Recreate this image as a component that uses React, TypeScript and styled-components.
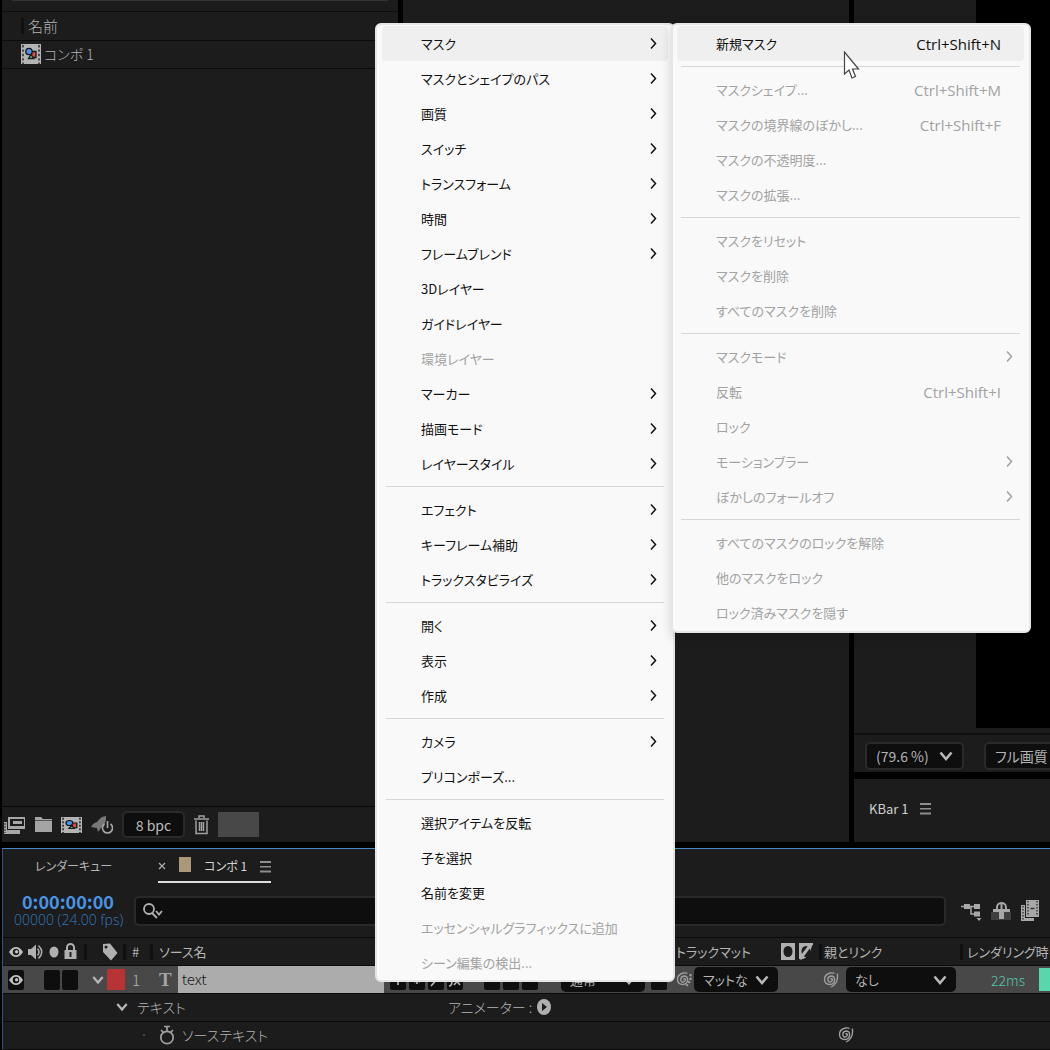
import React from "react";
import styled, { createGlobalStyle, css } from "styled-components";

const Global = createGlobalStyle`
  * { box-sizing: border-box; }
  html, body { margin: 0; background: #000; }
  body, button, input, select {
    font-family: "Noto Sans CJK JP", "Noto Sans", sans-serif;
    font-feature-settings: "palt";
    font-size: 15px;
    line-height: 20px;
    color: #b4b4b4;
  }
  body { overflow: hidden; }
  button { border: 0; margin: 0; padding: 0; background: none; white-space: nowrap; }
  svg { display: block; flex: none; }
`;

const Window = styled.main`
  position: relative;
  display: flex;
  flex-direction: column;
  gap: 6px;
  min-height: 100vh;
  padding-left: 2px;
  overflow: hidden;
`;

const Workspace = styled.div`
  flex: 1;
  display: flex;
  gap: 5px;
`;

const Panel = styled.section<{ $width?: string }>`
  display: flex;
  flex-direction: column;
  min-width: 0;
  background: #1c1c1c;
  ${(p) => (p.$width ? css`flex: none; width: ${p.$width};` : css`flex: 1;`)}
`;

const PanelTop = styled.div`
  height: 12px;
  border-bottom: 1px solid #0c0c0c;
  &::before {
    content: "";
    display: block;
    height: 1px;
    margin: 0 10px;
    background: #343434;
  }
`;

const ProjectTable = styled.table`
  width: 100%;
  border-collapse: collapse;
  text-align: left;
  tr { height: 28px; border-bottom: 1px solid #0c0c0c; }
  th, td { padding: 0 0 0 19px; font-weight: 300; }
`;

const HeadLabel = styled.span`
  display: flex;
  align-items: center;
  height: 16px;
  padding-left: 4px;
  border-left: 3px solid #101010;
`;

const AssetName = styled.span`
  display: flex;
  align-items: center;
  gap: 3px;
  font-size: 14px;
`;

const Spacer = styled.div`
  flex: 1;
`;

const Toolbar = styled.div<{ $gap: number }>`
  display: flex;
  align-items: center;
  gap: ${(p) => p.$gap}px;
  height: 36px;
  border-top: 1px solid #080808;
`;

const IconButton = styled.button`
  display: grid;
  place-items: center;
  color: #a4a4a4;
`;

const DepthButton = styled.button`
  width: 63px;
  height: 27px;
  border: 2px solid #2a2a2a;
  border-radius: 5px;
  background: #0e0e0e;
  color: #bcbcbc;
  font-size: 14px;
`;

const Swatch = styled.div`
  width: 41px;
  height: 25px;
  background: #484848;
`;

const RightColumn = styled.div`
  flex: 1;
  display: flex;
  flex-direction: column;
  gap: 7px;
  min-width: 0;
`;

const Canvas = styled.div`
  flex: 1;
  margin: 0 0 5px 122px;
  background: #000;
`;

const ViewerBar = styled.div`
  display: flex;
  align-items: center;
  gap: 10px;
  height: 39px;
  padding: 4px 0 0 11px;
  border-top: 2px solid #101010;
  overflow: hidden;
`;

const Divider = styled.span`
  width: 2px;
  height: 24px;
  background: #0c0c0c;
`;

const KBarPanel = styled.section`
  background: #1c1c1c;
`;

const KBar = styled.header`
  display: flex;
  align-items: center;
  gap: 12px;
  height: 63px;
  padding: 0 0 4px 15px;
  font-size: 13px;
  color: #cfcfcf;
`;

const SelectBox = styled.label<{ $width: number; $framed?: boolean }>`
  flex: none;
  display: grid;
  align-items: center;
  width: ${(p) => p.$width}px;
  height: ${(p) => (p.$framed ? 28 : 25)}px;
  border: ${(p) => (p.$framed ? "2px solid #2a2a2a" : "0")};
  border-radius: 5px;
  background: #0e0e0e;
  select, svg { grid-area: 1 / 1; }
  select {
    width: 100%;
    padding: 0 0 0 9px;
    border: 0;
    outline: 0;
    background: none;
    font-size: ${(p) => (p.$framed ? 14 : 13)}px;
    appearance: none;
  }
  svg { justify-self: end; margin-right: 9px; pointer-events: none; }
`;

const Timeline = styled.section`
  min-width: 0;
  border-top: 1px solid #4688c8;
  border-bottom: 1px solid #0a0a0a;
  border-left: 1px solid #27578c;
  background: #1c1c1c;
`;

const Tabs = styled.div`
  display: flex;
  align-items: center;
  gap: 46px;
  height: 36px;
  padding-left: 32px;
`;

const Tab = styled.button<{ $active?: boolean }>`
  display: flex;
  align-items: center;
  gap: 13px;
  height: 32px;
  border-bottom: 2px solid ${(p) => (p.$active ? "#dedede" : "transparent")};
  color: ${(p) => (p.$active ? "#d4d4d4" : "#b4b4b4")};
  font-size: 12px;
`;

const TabChip = styled.span`
  width: 12px;
  height: 15px;
  margin-bottom: 4px;
  background: #ab9878;
`;

const Controls = styled.div`
  display: flex;
  align-items: center;
  height: 52px;
  padding-right: 10px;
`;

const Clock = styled.div`
  width: 131px;
  padding-left: 11px;
`;

const Time = styled.div`
  padding-left: 8px;
  font-size: 18px;
  font-weight: 700;
  line-height: 18px;
  color: #4a94e4;
`;

const Frames = styled.div`
  font-family: "Open Sans", "Noto Sans", sans-serif;
  font-size: 14px;
  font-weight: 300;
  line-height: 20px;
  color: #3577bd;
  white-space: nowrap;
`;

const Search = styled.label`
  flex: 1;
  display: flex;
  align-items: center;
  gap: 6px;
  height: 30px;
  margin-right: 15px;
  padding-left: 7px;
  border: 2px solid #292929;
  border-radius: 5px;
  background: #0e0e0e;
  input { flex: 1; min-width: 0; border: 0; outline: 0; background: none; }
`;

const Tools = styled.div`
  display: flex;
  gap: 9px;
`;

const Row = styled.div<{ $selected?: boolean }>`
  display: grid;
  grid-template-columns: 84px 39px 27px 231px minmax(0, 1fr) 146px 141px 87px;
  align-items: center;
  height: 28px;
  border-top: 1px solid #0a0a0a;
  background: ${(p) => (p.$selected ? "#484848" : "transparent")};
  font-size: 13px;
  white-space: nowrap;
`;

const Cell = styled.div<{ $gap?: number; $pad?: number; $ruled?: boolean }>`
  display: flex;
  align-items: center;
  gap: ${(p) => p.$gap ?? 0}px;
  padding-left: ${(p) => p.$pad ?? 0}px;
  height: 16px;
  min-width: 0;
  border-right: ${(p) => (p.$ruled ? "3px solid #101010" : "0")};
`;

const Box = styled.button`
  flex: none;
  display: grid;
  place-items: center;
  width: 16px;
  height: 20px;
  border-radius: 2px;
  background: #0e0e0e;
  color: #c4c4c4;
`;

const ColorLabel = styled.span`
  width: 18px;
  height: 21px;
  background: #b83434;
`;

const Glyph = styled.span`
  font-family: "Liberation Serif", serif;
  font-size: 19px;
  font-weight: 700;
  color: #a4a4a4;
`;

const LayerName = styled.div`
  flex: 1;
  height: 27px;
  padding: 3px 4px;
  background: #acacac;
  color: #161616;
  font-size: 15px;
  font-weight: 300;
`;

const Thin = styled.span`
  font-size: 15px;
  font-weight: 300;
`;

const RenderTime = styled.span`
  color: #58c8ae;
  font-size: 14px;
  font-weight: 300;
`;

const RenderBar = styled.span`
  flex: 1;
  height: 23px;
  background: #58d6ac;
`;

const MatteIcons = styled.span`
  display: flex;
  gap: 4px;
  margin-left: auto;
  padding-right: 6px;
`;

const Property = styled.div<{ $indent: number }>`
  display: grid;
  grid-template-columns: ${(p) => 445 - p.$indent}px minmax(0, 1fr) 212px;
  align-items: center;
  height: 28px;
  padding: 0 0 2px ${(p) => p.$indent}px;
  border-top: 1px solid #0a0a0a;
  font-size: 14px;
  font-weight: 300;
  white-space: nowrap;
`;

const PropertyName = styled.div<{ $gap: number }>`
  display: flex;
  align-items: center;
  gap: ${(p) => p.$gap}px;
`;

const MenuPanel = styled.ul<{ $width: number }>`
  position: absolute;
  z-index: 2;
  width: ${(p) => p.$width}px;
  margin: 0;
  padding: 1px 5px 0;
  border: 2px solid #e6e6e6;
  border-radius: 6px;
  background: #f9f9f9;
  list-style: none;
`;

const ContextMenu = styled(MenuPanel)`
  top: 23px;
  left: 375px;
`;

const SubMenu = styled(MenuPanel)`
  top: -2px;
  left: 294px;
  padding: 1px 5px 1px 4px;
  box-shadow: 0 4px 12px rgba(0, 0, 0, 0.16);
`;

const MenuItem = styled.button<{ $open?: boolean; $chevron?: boolean }>`
  display: flex;
  align-items: center;
  justify-content: space-between;
  width: 100%;
  height: 35px;
  padding: 0 ${(p) => (p.$chevron ? 9 : 23)}px 0 39px;
  border-radius: 4px;
  background: ${(p) => (p.$open ? "#efefef" : "transparent")};
  color: #111;
  font-size: 13px;
  &:disabled { color: #a2a2a2; }
`;

const Shortcut = styled.kbd`
  font-family: "Open Sans", "Noto Sans", sans-serif;
  font-size: 15px;
`;

const Rule = styled.li`
  height: 1px;
  margin: 5px 4px;
  background: #d6d6d6;
`;

const Pointer = styled.svg`
  position: absolute;
  z-index: 3;
  top: 51px;
  left: 843px;
`;

type Entry = { t: string; sub?: boolean; off?: boolean; key?: string } | null;

const s = (t: string): Entry => ({ t, sub: true });
const n = (t: string): Entry => ({ t });
const d = (t: string, key?: string, sub?: boolean): Entry => ({ t, off: true, key, sub });

const layerMenu: Entry[] = [
  s("マスク"), s("マスクとシェイプのパス"), s("画質"), s("スイッチ"), s("トランスフォーム"),
  s("時間"), s("フレームブレンド"), n("3Dレイヤー"), n("ガイドレイヤー"), d("環境レイヤー"),
  s("マーカー"), s("描画モード"), s("レイヤースタイル"),
  null,
  s("エフェクト"), s("キーフレーム補助"), s("トラックスタビライズ"),
  null,
  s("開く"), s("表示"), s("作成"),
  null,
  s("カメラ"), n("プリコンポーズ..."),
  null,
  n("選択アイテムを反転"), n("子を選択"), n("名前を変更"),
  d("エッセンシャルグラフィックスに追加"), d("シーン編集の検出..."),
];

const maskMenu: Entry[] = [
  { t: "新規マスク", key: "Ctrl+Shift+N" },
  null,
  d("マスクシェイプ...", "Ctrl+Shift+M"), d("マスクの境界線のぼかし...", "Ctrl+Shift+F"),
  d("マスクの不透明度..."), d("マスクの拡張..."),
  null,
  d("マスクをリセット"), d("マスクを削除"), d("すべてのマスクを削除"),
  null,
  d("マスクモード", undefined, true), d("反転", "Ctrl+Shift+I"), d("ロック"),
  d("モーションブラー", undefined, true), d("ぼかしのフォールオフ", undefined, true),
  null,
  d("すべてのマスクのロックを解除"), d("他のマスクをロック"), d("ロック済みマスクを隠す"),
];

const Chevron = () => (
  <svg width="12" height="14" viewBox="0 0 12 14" fill="none" stroke="currentColor" strokeWidth="1.5">
    <path d="M4 1.5l4.5 5L4 11.5" />
  </svg>
);

const Down = ({ size = 14 }: { size?: number }) => (
  <svg width={size} height={size} viewBox="0 0 14 14" fill="none" stroke="#b8b8b8" strokeWidth="2.6">
    <path d="M1.5 3.5L7 10l5.5-6.5" />
  </svg>
);

const Lines = () => (
  <svg width="11" height="13" viewBox="0 0 11 13" fill="#8e8e8e">
    <path d="M0 1h11v2H0zM0 6h11v1.500H0zM0 10.500h11v2H0z" />
  </svg>
);

const Comp = ({ width = 20 }: { width?: number }) => (
  <svg width={width} height={width === 20 ? 20 : 16} viewBox="0 0 20 20" preserveAspectRatio="none">
    <path fill="#b4b4b4" d="M0 0h20v20H0z" />
    <path stroke="#333" strokeWidth="1.6" strokeDasharray="2.4 2" d="M2 1v19M18 1v19" />
    <path fill="#e04a3c" stroke="#181818" strokeWidth="1.3" d="M10.5 7.5h4.500v6h-4.500z" />
    <path fill="#50c8b8" stroke="#181818" strokeWidth="1.3" d="M7.5 14.5l2.5-4 2.8 4z" />
    <circle cx="8" cy="7.5" r="3.2" fill="#4b94ec" stroke="#181818" strokeWidth="1.3" />
  </svg>
);

const Eye = () => (
  <svg width="14" height="12" viewBox="0 0 14 12">
    <path fill="#c0c0c0" fillRule="evenodd" d="M0 6Q3 1 7 1t7 5q-3 5-7 5T0 6zm7-3.2a3.2 3.2 0 100 6.4 3.2 3.2 0 000-6.4z" />
    <circle cx="7.6" cy="5.8" r="1.7" fill="#c0c0c0" />
  </svg>
);

const Speaker = () => (
  <svg width="16" height="16" viewBox="0 0 16 16" fill="none" stroke="#b0b0b0" strokeWidth="1.5">
    <path fill="#b0b0b0" stroke="none" d="M0 5h3l5-4.5v15L3 11H0z" />
    <path d="M9.5 4.5q3 3.500 0 7M10.500 1.500q6.500 6.500 0 13" />
  </svg>
);

const Lock = () => (
  <svg width="13" height="17" viewBox="0 0 13 17">
    <path fill="none" stroke="#b0b0b0" strokeWidth="2" d="M3 8V4.500a3.500 3.500 0 017 0V8" />
    <path fill="#b0b0b0" d="M.5 7h12v9H.5z" />
    <path stroke="#222" strokeWidth="2" d="M6.500 9v5" />
  </svg>
);

const Tag = () => (
  <svg width="16" height="18" viewBox="0 0 16 18">
    <path fill="#b0b0b0" fillRule="evenodd" d="M1 1l7-.5L15.500 10 9 17.500 1 9zm3 1.500a1.500 1.500 0 100 3 1.500 1.500 0 000-3z" />
  </svg>
);

const Spiral = ({ dots }: { dots?: boolean }) => (
  <svg width="16" height="17" viewBox="0 0 16 17" fill="none" stroke="#9e9e9e" strokeWidth="1.400">
    <path d="M7.500 8.500Q8.500 7 9.300 8T8 10.800Q4.800 11.500 4.800 8.500T8 5q3.800 0 3.600 4T7 13.500Q1.700 13.500 1.500 8.500T7.500 2Q10 1.500 11.500 2.500" />
    {dots ? (
      <path strokeWidth="2.200" strokeDasharray="2.200 1.500" d="M14.500 3v6l-4 6" />
    ) : (
      <path d="M14.300 2.500q1.500 9.500-6.300 13.500" />
    )}
  </svg>
);

const Flow = () => (
  <svg width="21" height="20" viewBox="0 0 21 20">
    <path fill="none" stroke="#a8a8a8" strokeWidth="1.500" d="M0 5.500h14M10 5.500V13h4" />
    <path fill="#a8a8a8" d="M3 3h6v5H3zM13 3h6v5h-6zM13 10.500h6v5h-6zM15.500 17h5L18 20z" />
  </svg>
);

const Shy = () => (
  <svg width="21" height="20" viewBox="0 0 21 20">
    <path fill="#404040" d="M0 11h20v8H0z" />
    <path fill="#a8a8a8" d="M2 8h17v3h-6v7H8v-7H2z" />
    <path fill="none" stroke="#a8a8a8" strokeWidth="2" d="M6 8q-.5-6 4.500-6T15 8M10.500 2v6" />
  </svg>
);

const Film = () => (
  <svg width="19" height="22" viewBox="0 0 19 22">
    <path fill="#a8a8a8" d="M0 5h4v13h9v3H0zM5 0h13v17H5z" />
    <path stroke="#333" strokeWidth="1.400" strokeDasharray="1.500 1.500" d="M7 1v15M16 1v15M2 6v14" />
    <path stroke="#333" strokeWidth="1.500" d="M9.500 8.500h4" />
  </svg>
);

const Matte = ({ alt }: { alt?: boolean }) => (
  <svg width="14" height="17" viewBox="0 0 14 17">
    <path fill="#b0b0b0" d={alt ? "M0 0h14L11 9q-2 5-7 7H0z" : "M0 0h14v17H0z"} />
    <ellipse cx="7" cy="8.500" rx="4.500" ry="5.500" fill="#1c1c1c" />
    {alt && <path stroke="#b0b0b0" strokeWidth="3" d="M13 0L1 16" />}
  </svg>
);

const Stopwatch = () => (
  <svg width="16" height="20" viewBox="0 0 16 20" fill="none" stroke="#a0a0a0" strokeWidth="1.700">
    <circle cx="8" cy="12.500" r="6.200" />
    <path d="M5 1.500h6M8 1.500v5M2 5l2.500 2.500M14 5l-2.500 2.500" />
  </svg>
);

const switchMarks = [
  { label: "シャイ", path: "M2 8h12M8 3v10" },
  { label: "コラップス", path: "M8 4v8M5 6l6 4M11 6l-6 4" },
  { label: "画質", path: "M3 14L12 4" },
  { label: "エフェクト", path: "M2 14q3 0 3-5t3-5M7 13l6-7M8 7l5 6" },
];

const SwitchMark = ({ path }: { path: string }) => (
  <svg width="16" height="16" viewBox="0 0 16 16" fill="none" stroke="#b8b8b8" strokeWidth="1.600">
    <path d={path} />
  </svg>
);

const MenuItems = ({ items }: { items: Entry[] }) => (
  <>
    {items.map((item, i) =>
      item ? (
        <li key={i} role="none">
          <MenuItem role="menuitem" disabled={item.off} $open={i === 0} $chevron={item.sub}>
            <span>{item.t}</span>
            {item.key && <Shortcut>{item.key}</Shortcut>}
            {item.sub && <Chevron />}
          </MenuItem>
        </li>
      ) : (
        <Rule key={i} role="separator" />
      )
    )}
  </>
);

const Drop = ({ label, value, width, framed }: { label: string; value: string; width: number; framed?: boolean }) => (
  <SelectBox $width={width} $framed={framed}>
    <select aria-label={label}>
      <option>{value}</option>
    </select>
    <Down />
  </SelectBox>
);

export default function App() {
  return (
    <Window>
      <Global />
      <Workspace>
        <Panel $width="396px">
          <PanelTop />
          <ProjectTable>
            <thead>
              <tr><th><HeadLabel>名前</HeadLabel></th></tr>
            </thead>
            <tbody>
              <tr><td><AssetName><Comp />コンポ 1</AssetName></td></tr>
            </tbody>
          </ProjectTable>
          <Spacer />
          <Toolbar $gap={9}>
            <IconButton aria-label="フッテージを変換">
              <svg width="24" height="20" viewBox="0 0 24 20">
                <path fill="#a8a8a8" d="M2 7h3v8h13v4H2zM6 2h17v12H6z" />
                <path fill="#1c1c1c" d="M8 4h14v7H8z" />
                <path fill="#a8a8a8" d="M11 6h9v3h-9z" />
                <path stroke="#222" strokeDasharray="2 1" d="M3 8v10" />
              </svg>
            </IconButton>
            <IconButton aria-label="新規フォルダー">
              <svg width="17" height="16" viewBox="0 0 17 16"><path fill="#a4a4a4" d="M0 0h6l2 2h9v13H0z" /><path stroke="#555" d="M0 3.500h17" /></svg>
            </IconButton>
            <IconButton aria-label="新規コンポジション"><Comp width={21} /></IconButton>
            <IconButton aria-label="プロジェクト設定">
              <svg width="22" height="20" viewBox="0 0 22 20">
                <path fill="#777" d="M0 12Q2 8 6 7q4-6 9-6 1 7-5 12l-3 4-1-4z" />
                <path fill="none" stroke="#a8a8a8" strokeWidth="1.600" d="M13.500 9a5 5 0 106 0M16.500 6v7" />
              </svg>
            </IconButton>
            <DepthButton>8 bpc</DepthButton>
            <IconButton aria-label="削除">
              <svg width="15" height="20" viewBox="0 0 15 20" fill="none" stroke="#a0a0a0" strokeWidth="1.500">
                <path d="M0 4h15M5 3V1h5v2M2 5.500v13h11v-13M5.500 7v9M7.500 7v9M9.500 7v9" />
              </svg>
            </IconButton>
            <Swatch />
          </Toolbar>
        </Panel>
        <Panel $width="446px" />
        <RightColumn>
          <Panel>
            <Canvas />
            <ViewerBar>
              <Drop label="拡大率" value="(79.6 %)" width={99} framed />
              <Divider />
              <Drop label="解像度" value="フル画質" width={110} framed />
            </ViewerBar>
          </Panel>
          <KBarPanel>
            <KBar>KBar 1<Lines /></KBar>
          </KBarPanel>
        </RightColumn>
      </Workspace>

      <Timeline>
        <Tabs>
          <Tab>レンダーキュー</Tab>
          <Tab $active>
            <svg width="8" height="8" viewBox="0 0 8 8" stroke="#aaa" strokeWidth="1.300"><path d="M1 1l6 6M7 1L1 7" /></svg>
            <TabChip />
            <span>コンポ 1</span>
            <Lines />
          </Tab>
        </Tabs>
        <Controls>
          <Clock>
            <Time>0:00:00:00</Time>
            <Frames>00000 (24.00 fps)</Frames>
          </Clock>
          <Search>
            <svg width="20" height="18" viewBox="0 0 20 18" fill="none" stroke="#b0b0b0" strokeWidth="1.800">
              <circle cx="6" cy="7" r="5" /><path d="M9 11l5 5M13 9l3 3.500L19 9" />
            </svg>
            <input aria-label="検索" />
          </Search>
          <Tools>
            <IconButton aria-label="フローチャート"><Flow /></IconButton>
            <IconButton aria-label="シャイ"><Shy /></IconButton>
            <IconButton aria-label="フレームブレンド"><Film /></IconButton>
          </Tools>
        </Controls>

        <Row>
          <Cell $pad={6} $gap={5} $ruled>
            <Eye /><Speaker />
            <svg width="10" height="12"><ellipse cx="5" cy="6" rx="4.500" ry="5.500" fill="#b0b0b0" /></svg>
            <Lock />
          </Cell>
          <Cell $pad={15} $ruled><Tag /></Cell>
          <Cell $pad={6} $ruled>#</Cell>
          <Cell $pad={6}>ソース名</Cell>
          <Cell />
          <Cell $ruled>トラックマット<MatteIcons><Matte /><Matte alt /></MatteIcons></Cell>
          <Cell $pad={2} $ruled>親とリンク</Cell>
          <Cell $pad={4}>レンダリング時</Cell>
        </Row>

        <Row $selected>
          <Cell $pad={5} $gap={2}>
            <Box aria-label="表示"><Eye /></Box>
            <Cell $pad={18} $gap={2}><Box aria-label="ソロ" /><Box aria-label="ロック" /></Cell>
          </Cell>
          <Cell $pad={5} $gap={3}><Down size={12} /><ColorLabel /></Cell>
          <Cell $pad={6}><Thin>1</Thin></Cell>
          <Cell $pad={6} $gap={6}><Glyph>T</Glyph><LayerName>text</LayerName></Cell>
          <Cell $pad={6} $gap={3}>
            {switchMarks.map((m) => (
              <Box key={m.label} aria-label={m.label}><SwitchMark path={m.path} /></Box>
            ))}
            <Cell $pad={18} $gap={3}><Box /><Box /><Box /></Cell>
            <Cell $pad={20} $gap={6}><Drop label="描画モード" value="通常" width={84} /><Box /></Cell>
          </Cell>
          <Cell $gap={2}><Spiral dots /><Drop label="トラックマット" value="マットな" width={84} /></Cell>
          <Cell $pad={1} $gap={7}><Spiral /><Drop label="親とリンク" value="なし" width={110} /></Cell>
          <Cell $pad={28} $gap={14}><RenderTime>22ms</RenderTime><RenderBar /></Cell>
        </Row>

        <Property $indent={113}>
          <PropertyName $gap={9}><Down size={12} />テキスト</PropertyName>
          <PropertyName $gap={5}>
            アニメーター :
            <svg width="14" height="16" viewBox="0 0 14 16"><ellipse cx="7" cy="8" rx="7" ry="8" fill="#b0b0b0" /><path fill="#1c1c1c" d="M5 4l5 4-5 4z" /></svg>
          </PropertyName>
        </Property>
        <Property $indent={139}>
          <PropertyName $gap={7}>
            <svg width="10" height="4"><circle cx="2" cy="2" r="1" fill="#555" /></svg>
            <Stopwatch />ソーステキスト
          </PropertyName>
          <Cell />
          <Cell><Spiral /></Cell>
        </Property>
      </Timeline>

      <ContextMenu $width={300} role="menu">
        <MenuItems items={layerMenu} />
        <li role="none">
          <SubMenu $width={360} role="menu"><MenuItems items={maskMenu} /></SubMenu>
        </li>
      </ContextMenu>
      <Pointer width="18" height="29" viewBox="0 0 18 29">
        <path fill="#fff" stroke="#444" strokeWidth="1.200" d="M1.500 1v22l4.500-4 3 8 3.500-1.500-3-7.500h6z" />
      </Pointer>
    </Window>
  );
}
